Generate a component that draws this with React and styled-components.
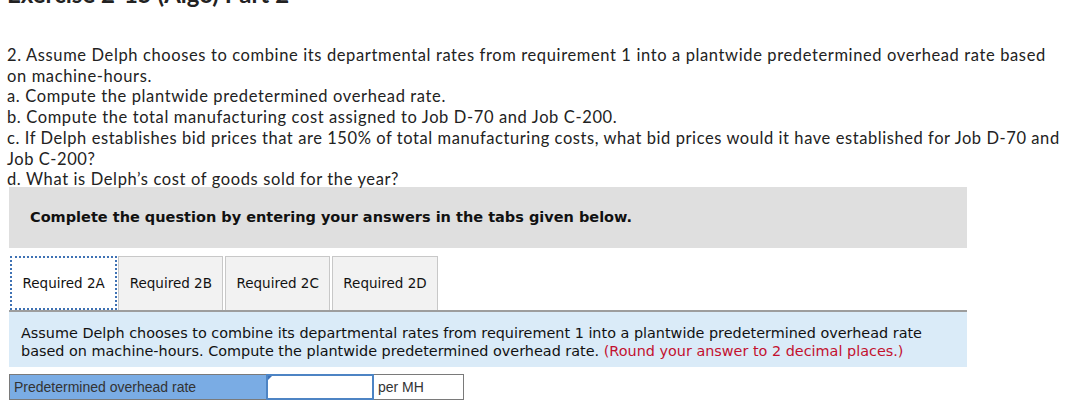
import React from "react";
import styled, { createGlobalStyle } from "styled-components";

const Global = createGlobalStyle`
  html, body { margin: 0; padding: 0; background: #fff; }
  body { overflow: hidden; }
`;

const Page = styled.div`
  padding: 0 2px 0 7px;
  width: 1059px;
  font-family: Lato, "Open Sans", sans-serif;
  color: #222;
`;

const Title = styled.h2`
  margin: -18px 0 0 0;
  font-size: 24px;
  line-height: 24px;
  font-weight: 700;
  color: #222;
`;

const Question = styled.div`
  margin-top: 39px;
  font-size: 16.5px;
  line-height: 20.7px;
`;

const Line = styled.div`
  letter-spacing: ${(p) => (p.$tight ? "0.57px" : "0.62px")};
`;

const Instruction = styled.div`
  margin: -3px 0 0 2px;
  width: 958px;
  height: 61px;
  background: #dfdfdf;
  display: flex;
  align-items: center;
  padding-left: 21px;
  box-sizing: border-box;
  font-family: "DejaVu Sans", Verdana, sans-serif;
  font-weight: 700;
  font-size: 14.5px;
  color: #111;
`;

const Tabs = styled.div`
  display: flex;
  gap: 1.5px;
  margin: 8px 0 0 3px;
  height: 54px;
`;

const Tab = styled.div`
  box-sizing: border-box;
  height: 54px;
  padding: 0 10.5px;
  display: flex;
  align-items: center;
  justify-content: center;
  font-family: "DejaVu Sans", Verdana, sans-serif;
  font-size: 13.5px;
  color: #111;
  background: ${(p) => (p.$active ? "#fff" : "#f2f2f2")};
  border: ${(p) => (p.$active ? "2px dotted #3f72b4" : "1px solid #c8c8c8")};
  border-bottom: ${(p) => (p.$active ? "2px dotted #3f72b4" : "none")};
  margin-right: ${(p) => (p.$active ? "-0.5px" : "0")};
`;

const Panel = styled.div`
  margin-left: 2px;
  width: 958px;
  box-sizing: border-box;
  background: #daebf8;
  border-top: 2px solid #9d9d9d;
  padding: 12px 14px 6px 12px;
  font-family: "DejaVu Sans", Verdana, sans-serif;
  font-size: 14.4px;
  line-height: 18.5px;
  color: #111;
`;

const Note = styled.span`
  color: #c3112f;
`;

const AnswerRow = styled.div`
  margin: 7px 0 0 2px;
  display: flex;
  height: 26px;
  font-family: "Liberation Sans", Arial, sans-serif;
  font-size: 14px;
  color: #333;
`;

const Label = styled.div`
  box-sizing: border-box;
  width: 257px;
  background: #7aace4;
  border: 1px solid #7a7a7a;
  border-right: none;
  display: flex;
  align-items: center;
  padding-left: 4px;
`;

const InputCell = styled.div`
  position: relative;
  box-sizing: border-box;
  width: 108px;
  background: #fff;
  border: 2px solid #4d84c4;
  &::before {
    content: "";
    position: absolute;
    left: 0;
    top: 0;
    border-top: 4px solid #3d72b8;
    border-right: 4px solid transparent;
  }
`;

const Unit = styled.div`
  box-sizing: border-box;
  width: 90px;
  background: #fff;
  border: 1px solid #7a7a7a;
  border-left: none;
  display: flex;
  align-items: center;
  padding-left: 4px;
`;

export default function App() {
  return (
    <>
      <Global />
      <Page>
        <Title>Exercise 2-15 (Algo) Part 2</Title>
        <Question>
          <Line>
            2. Assume Delph chooses to combine its departmental rates from requirement 1 into a plantwide predetermined overhead rate based on machine-hours.
          </Line>
          <Line>a. Compute the plantwide predetermined overhead rate.</Line>
          <Line>b. Compute the total manufacturing cost assigned to Job D-70 and Job C-200.</Line>
          <Line $tight>
            c. If Delph establishes bid prices that are 150% of total manufacturing costs, what bid prices would it have established for Job D-70 and Job C-200?
          </Line>
          <Line>d. What is Delph’s cost of goods sold for the year?</Line>
        </Question>
        <Instruction>Complete the question by entering your answers in the tabs given below.</Instruction>
        <Tabs>
          <Tab $active>Required 2A</Tab>
          <Tab>Required 2B</Tab>
          <Tab>Required 2C</Tab>
          <Tab>Required 2D</Tab>
        </Tabs>
        <Panel>
          Assume Delph chooses to combine its departmental rates from requirement 1 into a plantwide predetermined overhead rate based on machine-hours. Compute the plantwide predetermined overhead rate.{" "}
          <Note>(Round your answer to 2 decimal places.)</Note>
        </Panel>
        <AnswerRow>
          <Label>Predetermined overhead rate</Label>
          <InputCell />
          <Unit>per MH</Unit>
        </AnswerRow>
      </Page>
    </>
  );
}
